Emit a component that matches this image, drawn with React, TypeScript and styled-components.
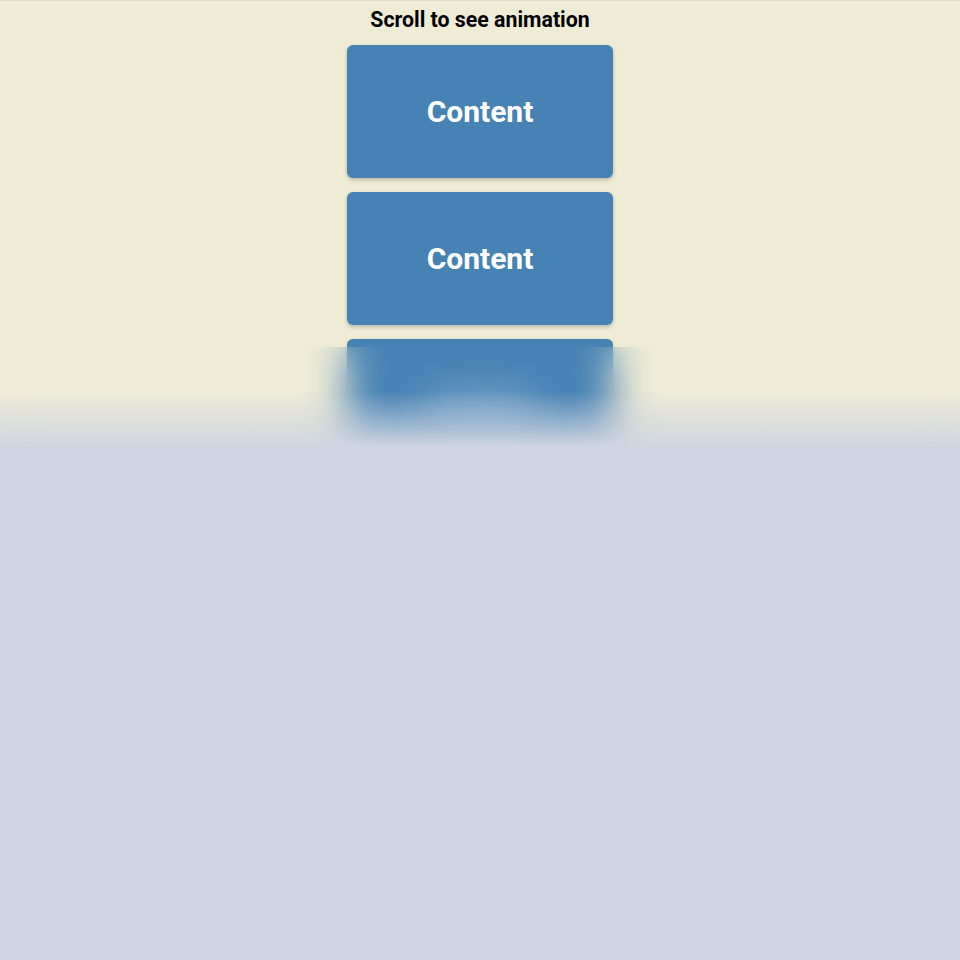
import React from "react";
import styled, { createGlobalStyle } from "styled-components";

const Global = createGlobalStyle`
  html, body {
    margin: 0;
    padding: 0;
    background: #efecd6;
    font-family: Roboto, "Liberation Sans", sans-serif;
  }
  body {
    border-top: 1px solid #dedbc4;
  }
`;

const Page = styled.main`
  display: flex;
  flex-direction: column;
  align-items: center;
  gap: 14px;
  padding-top: 7px;
`;

const Title = styled.h1`
  margin: 0;
  font-size: 21.3px;
  line-height: 23px;
  font-weight: 700;
  color: #000;
`;

const Card = styled.div`
  width: 266px;
  height: 133px;
  border-radius: 6px;
  background: #4682b4;
  box-shadow: 0 2px 4px rgba(0, 0, 0, 0.22);
  display: flex;
  align-items: center;
  justify-content: center;
  color: #fff;
  font-size: 30px;
  font-weight: 700;
  flex-shrink: 0;
`;

const Veil = styled.div`
  position: fixed;
  left: 0;
  right: 0;
  top: 347px;
  bottom: 0;
  backdrop-filter: blur(20px);
  -webkit-backdrop-filter: blur(20px);
  background: linear-gradient(
    to bottom,
    rgba(207, 213, 224, 0) 0px,
    rgba(207, 213, 224, 0) 44px,
    rgba(207, 213, 224, 1) 100px
  );
`;

export default function App() {
  const cards = Array.from({ length: 6 }, (_, i) => i);
  return (
    <>
      <Global />
      <Page>
        <Title>Scroll to see animation</Title>
        {cards.map((i) => (
          <Card key={i}>Content</Card>
        ))}
      </Page>
      <Veil />
    </>
  );
}
